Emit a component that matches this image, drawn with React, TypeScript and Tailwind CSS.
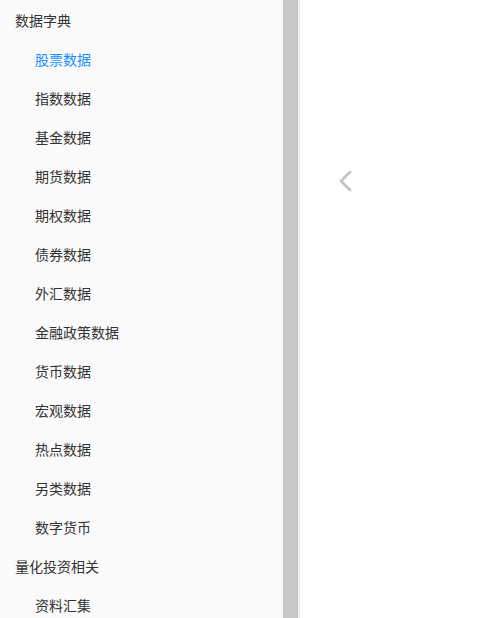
import { useState } from "react";

const groups = [
  {
    title: "数据字典",
    items: [
      "股票数据",
      "指数数据",
      "基金数据",
      "期货数据",
      "期权数据",
      "债券数据",
      "外汇数据",
      "金融政策数据",
      "货币数据",
      "宏观数据",
      "热点数据",
      "另类数据",
      "数字货币",
    ],
  },
  {
    title: "量化投资相关",
    items: ["资料汇集"],
  },
];

export default function App() {
  const [active, setActive] = useState("股票数据");

  return (
    <div
      className="flex h-[618px] w-[482px] overflow-hidden bg-white text-[14px] text-[#333]"
      style={{ fontFamily: '"Liberation Sans", "Noto Sans CJK SC", sans-serif' }}
    >
      <aside className="h-full w-[283px] shrink-0 overflow-hidden bg-[#fafafa] pt-[2px]">
        {groups.map((g) => (
          <div key={g.title}>
            <div className="flex h-[39px] items-center pl-[15px]">{g.title}</div>
            {g.items.map((item) => (
              <div
                key={item}
                onClick={() => setActive(item)}
                className={
                  "flex h-[39px] cursor-pointer items-center pl-[35px] " +
                  (active === item ? "text-[#1890ff]" : "")
                }
              >
                {item}
              </div>
            ))}
          </div>
        ))}
      </aside>

      <div className="h-full w-[15px] shrink-0 bg-[#c8c8c8]" />
      <div className="h-full w-[2px] shrink-0 bg-[#ececec]" />

      <main className="flex-1 pl-[38px] pt-[170px]">
        <svg width="14" height="22" viewBox="0 0 14 22" fill="none">
          <path d="M12 2 L3 11 L12 20" stroke="#c0c4cc" strokeWidth="2.8" strokeLinecap="round" strokeLinejoin="round" />
        </svg>
      </main>
    </div>
  );
}
